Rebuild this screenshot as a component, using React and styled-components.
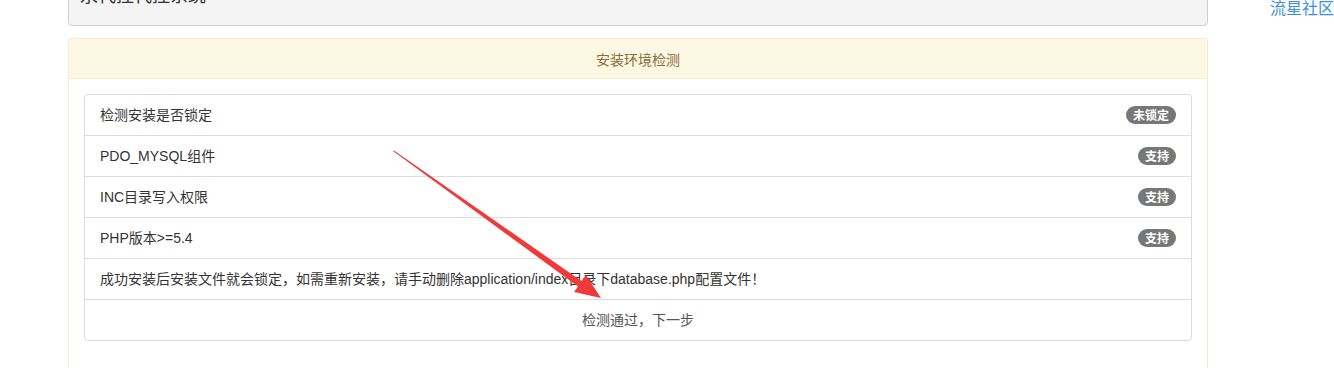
import React from "react";
import styled, { createGlobalStyle } from "styled-components";

const GlobalStyle = createGlobalStyle`
  html, body {
    margin: 0;
    padding: 0;
    background: #fff;
    overflow: hidden;
  }
  body {
    font-family: "Liberation Sans", Arial, "Noto Sans CJK SC", sans-serif;
    font-size: 14px;
    line-height: 20px;
    color: #333;
  }
`;

const Page = styled.div`
  display: flex;
  align-items: flex-start;
  margin-top: -36px;
  padding-left: 68px;
`;

const Main = styled.div`
  position: relative;
  width: 1140px;
  flex: none;
`;

const Side = styled.a`
  margin-left: 62px;
  margin-top: 34px;
  font-size: 16px;
  line-height: 18px;
  color: #3d8fdc;
  text-decoration: none;
  font-family: "Noto Sans CJK SC", sans-serif;
  white-space: nowrap;
`;

const Well = styled.div`
  background: #f4f4f4;
  border: 1px solid #cfcfcf;
  border-radius: 4px;
  padding: 19px 11px 21px;
  font-size: 18px;
  line-height: 20px;
  color: #333;
  font-family: "Noto Sans CJK SC", sans-serif;
`;

const Panel = styled.div`
  margin-top: 12px;
  border: 1px solid #faebcc;
  border-bottom: none;
  border-radius: 4px 4px 0 0;
  background: #fff;
`;

const PanelHeading = styled.div`
  background: #fcf8e3;
  color: #8a6d3b;
  border-bottom: 1px solid #faebcc;
  border-radius: 3px 3px 0 0;
  padding: 10px 15px 9px;
  text-align: center;
  font-family: "Noto Sans CJK SC", sans-serif;
`;

const PanelBody = styled.div`
  padding: 15px 15px 40px;
`;

const ListGroup = styled.div`
  display: flex;
  flex-direction: column;
`;

const Item = styled.div`
  display: flex;
  align-items: center;
  justify-content: ${(p) => (p.$center ? "center" : "space-between")};
  padding: 10px 15px;
  margin-bottom: -1px;
  border: 1px solid #ddd;
  color: ${(p) => (p.$center ? "#555" : "#333")};
  background: #fff;
  &:first-child {
    border-radius: 4px 4px 0 0;
  }
  &:last-child {
    margin-bottom: 0;
    border-radius: 0 0 4px 4px;
  }
`;

const Label = styled.span`
  font-family: "Liberation Sans", Arial, "Noto Sans CJK SC", sans-serif;
`;

const Badge = styled.span`
  display: inline-block;
  background: #777;
  color: #fff;
  font-size: 12px;
  font-weight: 700;
  line-height: 12px;
  padding: 3px 7px;
  border-radius: 10px;
  font-family: "Noto Sans CJK SC", sans-serif;
`;

const Arrow = styled.svg`
  position: absolute;
  left: 0;
  top: 36px;
  pointer-events: none;
`;

const checks = [
  { label: "检测安装是否锁定", badge: "未锁定" },
  { label: "PDO_MYSQL组件", badge: "支持" },
  { label: "INC目录写入权限", badge: "支持" },
  { label: "PHP版本>=5.4", badge: "支持" },
];

// arrow drawn in page coords, shifted by the main column offset
const ox = 68;
const pt = (x, y) => `${x - ox},${y}`;

export default function App() {
  return (
    <>
      <GlobalStyle />
      <Page>
        <Main>
          <Well>永代挂代挂系统</Well>
          <Panel>
            <PanelHeading>安装环境检测</PanelHeading>
            <PanelBody>
              <ListGroup>
                {checks.map((c) => (
                  <Item key={c.label}>
                    <Label>{c.label}</Label>
                    <Badge>{c.badge}</Badge>
                  </Item>
                ))}
                <Item>
                  <Label>
                    成功安装后安装文件就会锁定，如需重新安装，请手动删除application/index目录下database.php配置文件！
                  </Label>
                </Item>
                <Item $center>
                  <Label>检测通过，下一步</Label>
                </Item>
              </ListGroup>
            </PanelBody>
          </Panel>
          <Arrow width="1140" height="332" viewBox="0 0 1140 332">
            <polygon
              fill="#f03a3a"
              points={[
                pt(393, 151),
                pt(394, 150.5),
                pt(581.5, 281),
                pt(586, 275),
                pt(601, 298),
                pt(574, 292),
                pt(578, 286.5),
              ].join(" ")}
            />
          </Arrow>
        </Main>
        <Side href="#">流星社区</Side>
      </Page>
    </>
  );
}
